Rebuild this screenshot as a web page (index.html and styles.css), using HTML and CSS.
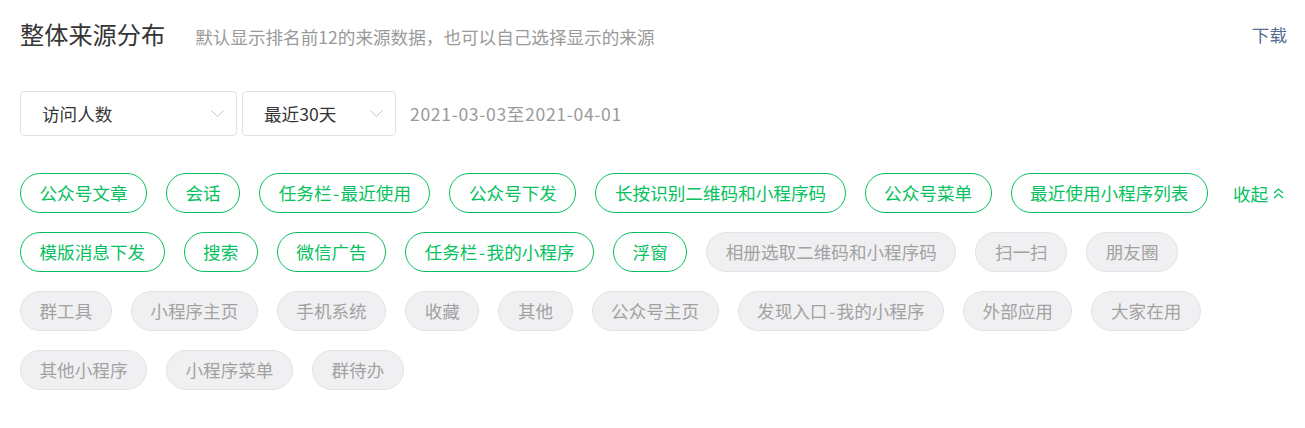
FILE: index.html
```html
<!DOCTYPE html>
<html lang="zh-CN">
<head>
    <meta charset="UTF-8">
    <title>整体来源分布</title>
    <link rel="stylesheet" href="styles.css">
</head>
<body>
    <div class="page">
        <div class="header">
            <h2 class="title">整体来源分布</h2>
            <span class="desc">默认显示排名前12的来源数据，也可以自己选择显示的来源</span>
            <a class="download" href="#">下载</a>
        </div>

        <div class="filters">
            <div class="select select-wide">
                <span>访问人数</span>
                <svg class="arrow" width="13" height="7" viewBox="0 0 13 7"><polyline points="0.5,0.5 6.5,6.5 12.5,0.5" fill="none" stroke="#c4c4c4" stroke-width="1"/></svg>
            </div>
            <div class="select select-narrow">
                <span>最近30天</span>
                <svg class="arrow" width="13" height="7" viewBox="0 0 13 7"><polyline points="0.5,0.5 6.5,6.5 12.5,0.5" fill="none" stroke="#c4c4c4" stroke-width="1"/></svg>
            </div>
            <span class="range">2021-03-03至2021-04-01</span>
        </div>

        <div class="tags-wrap">
            <div class="tags">
                <span class="tag on">公众号文章</span>
                <span class="tag on">会话</span>
                <span class="tag on">任务栏<span class="dash">-</span>最近使用</span>
                <span class="tag on">公众号下发</span>
                <span class="tag on">长按识别二维码和小程序码</span>
                <span class="tag on">公众号菜单</span>
                <span class="tag on">最近使用小程序列表</span>
                <span class="tag on">模版消息下发</span>
                <span class="tag on">搜索</span>
                <span class="tag on">微信广告</span>
                <span class="tag on">任务栏<span class="dash">-</span>我的小程序</span>
                <span class="tag on">浮窗</span>
                <span class="tag">相册选取二维码和小程序码</span>
                <span class="tag">扫一扫</span>
                <span class="tag">朋友圈</span>
                <span class="tag">群工具</span>
                <span class="tag">小程序主页</span>
                <span class="tag">手机系统</span>
                <span class="tag">收藏</span>
                <span class="tag">其他</span>
                <span class="tag">公众号主页</span>
                <span class="tag">发现入口<span class="dash">-</span>我的小程序</span>
                <span class="tag">外部应用</span>
                <span class="tag">大家在用</span>
                <span class="tag">其他小程序</span>
                <span class="tag">小程序菜单</span>
                <span class="tag">群待办</span>
            </div>
            <a class="toggle" href="#">
                收起
                <svg width="11" height="11" viewBox="0 0 11 11"><polyline points="1,5 5.5,1 10,5" fill="none" stroke="#07c160" stroke-width="1.3"/><polyline points="1,10 5.5,6 10,10" fill="none" stroke="#07c160" stroke-width="1.3"/></svg>
            </a>
        </div>
    </div>
</body>
</html>
```

FILE: styles.css
```css
* { margin: 0; padding: 0; box-sizing: border-box; }
body {
    font-family: "Noto Sans CJK SC", "Noto Sans", sans-serif;
    background: #fff;
    color: #353535;
}
.page { padding: 17px 18px 0 20px; }

.header { display: flex; align-items: center; height: 34px; }
.title { font-size: 24.2px; font-weight: normal; color: #353535; line-height: 34px; }
.desc { font-size: 17.6px; color: #9a9a9a; margin-left: 30px; margin-top: 4px; }
.download { margin-left: auto; font-size: 17.6px; color: #576b95; text-decoration: none; }

.filters { display: flex; align-items: center; margin-top: 40px; }
.select {
    display: flex;
    align-items: center;
    justify-content: space-between;
    height: 45px;
    padding: 0 12px 0 21px;
    border: 1px solid #e2e2e2;
    border-radius: 4px;
    font-size: 17.6px;
    color: #353535;
}
.select-wide { width: 217px; }
.select-narrow { width: 154px; margin-left: 5px; }
.arrow { display: block; }
.range { margin-left: 14px; font-size: 17.6px; color: #9a9a9a; letter-spacing: 0.65px; }

.tags-wrap { display: flex; margin-top: 37px; }
.tags { flex: 1; display: flex; flex-wrap: wrap; gap: 19px 19px; }
.tag {
    height: 40px;
    line-height: 38px;
    padding: 0 18.5px;
    border: 1px solid #e3e3e5;
    border-radius: 20px;
    background: #f0f0f2;
    color: #a2a2a2;
    font-size: 17.6px;
    white-space: nowrap;
}
.tag.on { background: #fff; border-color: #07c160; color: #07c160; }
.dash { padding: 0 1.5px; }
.toggle {
    display: flex;
    align-items: center;
    gap: 5px;
    height: 40px;
    width: 54px;
    margin-left: 20px;
    font-size: 17.6px;
    color: #07c160;
    text-decoration: none;
    white-space: nowrap;
}
```
